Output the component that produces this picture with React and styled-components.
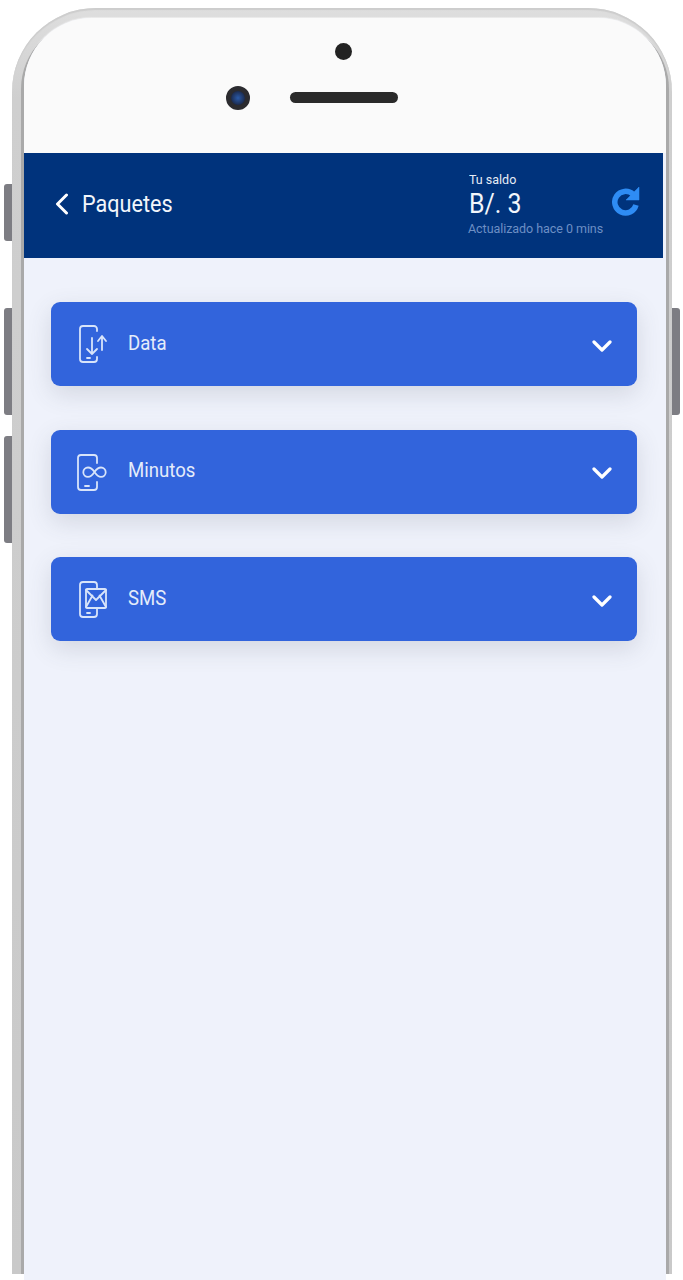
import React from "react";
import styled, { createGlobalStyle } from "styled-components";

const GlobalStyle = createGlobalStyle`
  html, body {
    margin: 0;
    padding: 0;
    height: 1280px;
    overflow: hidden;
    background: #ffffff;
    font-family: Roboto, "Liberation Sans", sans-serif;
  }
`;

const Page = styled.div`
  width: 683px;
  height: 1280px;
  padding: 8px 11px 0 12px;
  box-sizing: border-box;
`;

const Phone = styled.div`
  position: relative;
  height: 1266px;
  padding: 10px 6px 0 12px;
  box-sizing: border-box;
  border-radius: 84px 84px 0 0;
  background: linear-gradient(180deg, #dedede 0, #cfcfcf 90px, #c9c9c9 100%);
  box-shadow: inset 0 2px 1px #cdcdcd;
`;

const SideButton = styled.span`
  position: absolute;
  top: ${(p) => p.$top}px;
  ${(p) => (p.$right ? "right: -8px;" : "left: -8px;")}
  width: 8px;
  height: ${(p) => p.$height}px;
  background: #7d7d83;
  border-radius: ${(p) => (p.$right ? "0 3px 3px 0" : "3px 0 0 3px")};
`;

const Screen = styled.div`
  position: relative;
  display: flex;
  flex-direction: column;
  height: 1253px;
  border-radius: 68px 68px 0 0;
  background: #eff2fb;
  box-shadow: -3px 3px 0 #a9a9a9, 3px 3px 0 #a9a9a9, 0 -1px 1px #ececec;

  /* the screen runs on below the end of the metal frame */
  &::after {
    content: "";
    position: absolute;
    top: 100%;
    left: 0;
    right: 0;
    height: 9px;
    background: #eff2fb;
  }
`;

const Bezel = styled.div`
  position: relative;
  flex: 0 0 135px;
  background: #fafafa;
  border-radius: 68px 68px 0 0;
`;

const Sensor = styled.span`
  position: absolute;
  left: 311px;
  top: 25px;
  width: 17px;
  height: 17px;
  border-radius: 50%;
  background: #222222;
`;

const Camera = styled.span`
  position: absolute;
  left: 202px;
  top: 68px;
  width: 24px;
  height: 24px;
  border-radius: 50%;
  box-sizing: border-box;
  border: 5px solid #2b2b2f;
  background: radial-gradient(circle, #2a5aa8 0, #1c2c50 70%);
`;

const Speaker = styled.span`
  position: absolute;
  left: 266px;
  top: 74px;
  width: 108px;
  height: 11px;
  border-radius: 6px;
  background: #2a2a2a;
`;

const Header = styled.header`
  flex: 0 0 105px;
  margin-right: 3px;
  display: flex;
  align-items: center;
  padding: 0 23px 0 31px;
  background: #00337c;
  color: #ffffff;
`;

const BackLink = styled.div`
  display: flex;
  align-items: center;
  gap: 13px;
  flex: 1;
  margin-top: -3px;
`;

const Title = styled.span`
  font-size: 24px;
  color: #f2f6fb;
  display: inline-block;
  transform: scaleX(0.9);
  transform-origin: left center;
`;

const Balance = styled.div`
  display: flex;
  flex-direction: column;
  align-items: flex-start;
  width: 136px;
  margin-right: 7px;
  margin-top: -3px;
`;

const BalanceLabel = styled.span`
  font-size: 13px;
  line-height: 15px;
  color: #e6ecf6;
  transform: scaleX(0.96);
  transform-origin: left center;
`;

const BalanceValue = styled.span`
  font-size: 28px;
  line-height: 33px;
  color: #f2f6fb;
  transform: scaleX(0.89);
  transform-origin: left center;
`;

const BalanceNote = styled.span`
  margin: 1px 0 0 -1px;
  font-size: 12.5px;
  line-height: 15px;
  letter-spacing: -0.05px;
  color: #6d8fc4;
  white-space: nowrap;
`;

const RefreshIcon = styled.svg`
  width: 28px;
  height: 30px;
  margin-top: -9px;
  fill: #2e8cf4;
  stroke: #2e8cf4;
`;

const List = styled.div`
  display: flex;
  flex-direction: column;
  gap: 43.5px;
  padding: 44px 29px 0 27px;
`;

const Card = styled.div`
  height: 84px;
  display: flex;
  align-items: center;
  padding: 0 25px 0 26px;
  border-radius: 9px;
  background: #3264dc;
  box-shadow: 0 8px 24px rgba(70, 75, 95, 0.16);
  color: #e4ecfa;
`;

const CardIcon = styled.svg`
  width: 32px;
  height: 40px;
  fill: none;
  stroke: #d8e4fa;
  stroke-width: 1.8;
  stroke-linecap: round;
  stroke-linejoin: round;
`;

const CardLabel = styled.span`
  flex: 1;
  margin: -3px 0 0 19px;
  font-size: 20px;
  display: inline-block;
  transform: scaleX(0.93);
  transform-origin: left center;
`;

const Chevron = styled.svg`
  width: 20px;
  height: 12px;
  margin-top: 3px;
  fill: none;
  stroke: #ffffff;
  stroke-width: 3.2;
  stroke-linecap: round;
  stroke-linejoin: round;
`;

const BackIcon = styled.svg`
  width: 14px;
  height: 22px;
  fill: none;
  stroke: #ffffff;
  stroke-width: 3;
  stroke-linecap: round;
  stroke-linejoin: round;
`;

const DataIcon = () => (
  <CardIcon viewBox="0 0 32 40">
    <path d="M20 7V5a3 3 0 0 0-3-3H6a3 3 0 0 0-3 3v30a3 3 0 0 0 3 3h11a3 3 0 0 0 3-3v-2" />
    <path d="M10 34h3" />
    <path d="M15 14v16M10 25l5 5 5-5" />
    <path d="M25 26V13M21 17l4-5 4 5" />
  </CardIcon>
);

const InfinityIcon = () => (
  <CardIcon viewBox="0 0 32 40">
    <path d="M20 11V6a3 3 0 0 0-3-3H4a3 3 0 0 0-3 3v29a3 3 0 0 0 3 3h13a3 3 0 0 0 3-3v-5" />
    <path d="M8 34h4" />
    <path d="M17.500 20c-2-3-4-4.500-6.500-4.500a4.700 4.700 0 0 0 0 9.400c2.500 0 4.500-1.900 6.500-4.900s4-4.500 6.500-4.500a4.700 4.700 0 0 1 0 9.400c-2.500 0-4.500-1.900-6.500-4.900z" />
  </CardIcon>
);

const MessageIcon = () => (
  <CardIcon viewBox="0 0 32 40">
    <path d="M20 10V6a3 3 0 0 0-3-3H6a3 3 0 0 0-3 3v29a3 3 0 0 0 3 3h11a3 3 0 0 0 3-3v-6" />
    <path d="M10 34h3" />
    <rect x="9" y="10" width="20" height="19" rx="1" />
    <path d="M9 11l10 10 10-10M9 28l6.500-11.500M29 28l-6.500-11.500" />
  </CardIcon>
);

const packages = [
  { name: "Data", Icon: DataIcon },
  { name: "Minutos", Icon: InfinityIcon },
  { name: "SMS", Icon: MessageIcon },
];

const App = () => (
  <Page>
    <GlobalStyle />
    <Phone>
      <SideButton $top={176} $height={57} />
      <SideButton $top={300} $height={107} />
      <SideButton $top={428} $height={107} />
      <SideButton $right $top={300} $height={107} />
      <Screen>
        <Bezel>
          <Sensor />
          <Camera />
          <Speaker />
        </Bezel>
        <Header>
          <BackLink>
            <BackIcon viewBox="0 0 14 22">
              <path d="M11.500 2 2.500 11l9 9" />
            </BackIcon>
            <Title>Paquetes</Title>
          </BackLink>
          <Balance>
            <BalanceLabel>Tu saldo</BalanceLabel>
            <BalanceValue>B/. 3</BalanceValue>
            <BalanceNote>Actualizado hace 0 mins</BalanceNote>
          </Balance>
          <RefreshIcon viewBox="0 0 28 30">
            <path d="M21 8.300A10.800 10.800 0 1 0 24 19" fill="none" strokeWidth="5.500" />
            <path d="M27 1v13H14z" strokeWidth="0.500" strokeLinejoin="round" />
          </RefreshIcon>
        </Header>
        <List>
          {packages.map(({ name, Icon }) => (
            <Card key={name}>
              <Icon />
              <CardLabel>{name}</CardLabel>
              <Chevron viewBox="0 0 20 12">
                <path d="M2 2l8 8 8-8" />
              </Chevron>
            </Card>
          ))}
        </List>
      </Screen>
    </Phone>
  </Page>
);

export default App;
